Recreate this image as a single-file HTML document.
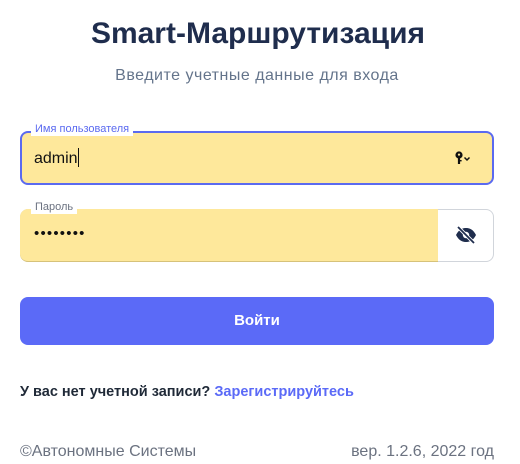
<!DOCTYPE html>
<html><head><meta charset="utf-8"><style>
*{box-sizing:border-box;margin:0;padding:0}
body{width:520px;height:464px;background:#fff;font-family:"Liberation Sans",sans-serif;position:relative;overflow:hidden}
.a{position:absolute;white-space:nowrap}
</style></head><body>
<div class="a" style="left:0;width:516px;top:17px;text-align:center;font-size:30px;font-weight:bold;color:#1f2d4d">Smart-Маршрутизация</div>
<div class="a" style="left:0;width:514px;top:67px;text-align:center;font-size:16px;letter-spacing:0.5px;color:#64748b">Введите учетные данные для входа</div>

<div class="a" style="left:20px;top:131px;width:474px;height:54px;border:2px solid #5b6af0;border-radius:8px;background:#fee89b"></div>
<div class="a" style="left:31px;top:123px;padding:0 4px;background:#fff;font-size:11px;color:#5b6af0;line-height:13px">Имя пользователя</div>
<div class="a" style="left:34px;top:148px;font-size:16px;color:#111">admin<span style="display:inline-block;width:1px;height:19px;background:#111;vertical-align:-4px"></span></div>
<svg class="a" style="left:454px;top:150px" width="20" height="16" viewBox="0 0 20 16"><circle cx="5" cy="5" r="3.6" fill="#111"/><circle cx="5" cy="4.6" r="1.1" fill="#fee89b"/><rect x="3.9" y="7" width="2.2" height="7" fill="#111"/><rect x="6" y="10" width="1.6" height="1.4" fill="#111"/><path d="M10.5 7.5l2.5 2.5 2.5-2.5" stroke="#111" stroke-width="1.5" fill="none"/></svg>

<div class="a" style="left:20px;top:209px;width:474px;height:53px;border:1px solid #d1d5db;border-radius:8px;background:#fff"></div>
<div class="a" style="left:20px;top:209px;width:418px;height:53px;border-radius:8px 0 0 8px;background:#fee89b;border-bottom:1px solid #d6c27a"></div>
<div class="a" style="left:31px;top:201px;padding:0 4px;background:#fff;font-size:11px;color:#6b7280;line-height:13px">Пароль</div>
<div class="a" style="left:34px;top:225px;font-size:15px;color:#111;letter-spacing:1.2px">••••••••</div>
<svg class="a" style="left:455px;top:225px" width="22" height="20" viewBox="0 0 22 20"><path d="M1 10C4 4 8 3 11 3s7 1 10 7c-3 6-7 7-10 7S4 16 1 10z" fill="#1f2d4d"/><circle cx="11" cy="10" r="3.2" fill="#fff"/><path d="M3 2l16 16" stroke="#fff" stroke-width="3.5"/><path d="M3 2l16 16" stroke="#1f2d4d" stroke-width="1.8"/></svg>

<div class="a" style="left:20px;top:297px;width:474px;height:48px;border-radius:8px;background:#5b6af7;color:#fff;font-weight:bold;font-size:15px;text-align:center;line-height:48px">Войти</div>

<div class="a" style="left:20px;top:384px;font-size:14.5px;font-weight:bold;color:#1f2937">У вас нет учетной записи? <span style="color:#5b6af7">Зарегистрируйтесь</span></div>
<div class="a" style="left:20px;top:443px;font-size:16px;color:#6b7280">©Автономные Системы</div>
<div class="a" style="right:26px;top:443px;font-size:16px;color:#6b7280">вер. 1.2.6, 2022 год</div>
</body></html>
